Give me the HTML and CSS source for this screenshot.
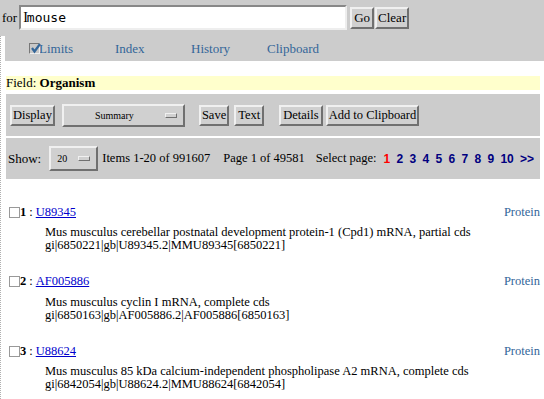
FILE: index.html
```html
<!DOCTYPE html>
<html>
<head>
<meta charset="utf-8">
<link rel="stylesheet" href="styles.css">
</head>
<body>
<div class="search">
  <span class="for">for</span>
  <div class="input"><span class="caret">I</span>mouse</div>
  <span class="btn go">Go</span>
  <span class="btn clear">Clear</span>
</div>
<div class="page">
  <div class="gutter"></div>
  <div class="content">
    <div class="tabs">
      <span class="tab limits"><span class="cbx checked"><svg width="11" height="11" viewBox="0 0 11 11"><path d="M2 5 L4.5 8.5 L10 1" fill="none" stroke="#336699" stroke-width="2.2"/></svg></span>Limits</span>
      <span class="tab">Index</span>
      <span class="tab">History</span>
      <span class="tab">Clipboard</span>
    </div>
    <div class="inner">
      <div class="field">Field: <b>Organism</b></div>
      <div class="bar display">
        <span class="btn">Display</span>
        <span class="option wide"><span class="opt-label small">Summary</span><span class="ind"></span></span>
        <span class="btn save">Save</span>
        <span class="btn text">Text</span>
        <span class="btn details">Details</span>
        <span class="btn add">Add to Clipboard</span>
      </div>
      <div class="bar show">
        <span class="showlbl">Show:</span>
        <span class="option narrow"><span class="opt-label small">20</span><span class="ind"></span></span>
        <span class="items">Items 1-20 of 991607</span>
        <span class="pageof">Page 1 of 49581</span>
        <span class="sel">Select page:</span>
        <span class="pages"><span class="cur">1</span><a>2</a><a>3</a><a>4</a><a>5</a><a>6</a><a>7</a><a>8</a><a>9</a><a>10</a><a>&gt;&gt;</a></span>
      </div>
      <div class="results">
        <div class="doc">
          <div class="head"><span class="cb"></span><b>1</b> : <a class="acc">U89345</a><span class="prot">Protein</span></div>
          <div class="desc">Mus musculus cerebellar postnatal development protein-1 (Cpd1) mRNA, partial cds<br>gi|6850221|gb|U89345.2|MMU89345[6850221]</div>
        </div>
        <div class="doc">
          <div class="head"><span class="cb"></span><b>2</b> : <a class="acc">AF005886</a><span class="prot">Protein</span></div>
          <div class="desc">Mus musculus cyclin I mRNA, complete cds<br>gi|6850163|gb|AF005886.2|AF005886[6850163]</div>
        </div>
        <div class="doc">
          <div class="head"><span class="cb"></span><b>3</b> : <a class="acc">U88624 </a><span class="prot">Protein</span></div>
          <div class="desc">Mus musculus 85 kDa calcium-independent phospholipase A2 mRNA, complete cds<br>gi|6842054|gb|U88624.2|MMU88624[6842054]</div>
        </div>
      </div>
    </div>
  </div>
</div>
</body>
</html>
```
FILE: styles.css
```css
html, body { margin: 0; padding: 0; background: #fff; }
body { font-family: "Liberation Serif", "Times New Roman", serif; font-size: 12.5px; color: #000; width: 544px; height: 399px; overflow: hidden; white-space: nowrap; }

.search { background: #cccccc; height: 36px; display: flex; align-items: center; padding-left: 2px; box-sizing: border-box; }
.for { margin-right: 2px; font-size: 13px; }
.input { width: 322px; height: 21px; background: #fff; border: 2px solid; border-color: #888 #eee #eee #888; font-family: "DejaVu Sans Mono", monospace; font-size: 13px; line-height: 21px; padding-left: 2px; margin-top: -2px; }
.caret { font-family: "Liberation Serif", serif; font-size: 14px; margin-right: -1px; }

.btn { display: inline-block; background: #d0d0d0; border: 2px solid; border-color: #f0f0f0 #707070 #707070 #f0f0f0; padding: 0 1px; height: 17px; line-height: 17px; font-size: 12.5px; }
.go { margin-left: 3px; padding: 0 2px; height: 18px; line-height: 18px; font-size: 13px; }
.clear { margin-left: 1px; padding: 0 1px; height: 18px; line-height: 18px; font-size: 13px; }

.page { display: flex; }
.gutter { width: 5px; border-left: 1px dotted #b0b0b0; box-sizing: border-box; height: 363px; }
.content { flex: 1; }

.tabs { background: #cccccc; height: 25px; display: flex; align-items: center; color: #336699; font-size: 13px; padding-left: 24px; }
.tab { width: 76px; }
.limits { width: 86px; display: flex; align-items: center; }
.cbx { display: inline-block; width: 9px; height: 9px; border: 1px solid; border-color: #777 #eee #eee #777; background: #c8c8c8; position: relative; margin-right: -1px; }
.cbx svg { position: absolute; left: 0; top: -1px; }

.inner { width: 534px; padding-left: 1px; }
.field { background: #ffffcc; height: 14px; line-height: 14px; margin-top: 15px; font-size: 13px; }
.bar { background: #cccccc; display: flex; align-items: center; }
.display { margin-top: 4px; height: 42px; padding-left: 4px; }
.show { margin-top: 2px; height: 41px; padding-left: 2px; }

.option { display: inline-flex; align-items: center; justify-content: space-between; background: #d0d0d0; border: 2px solid; border-color: #f0f0f0 #707070 #707070 #f0f0f0; height: 19px; box-sizing: content-box; }
.wide { width: 113px; margin-left: 7px; padding: 0 6px 0 0; }
.wide .opt-label { flex: 1; text-align: center; }
.narrow { width: 33px; margin-left: 8px; padding: 0 6px 0 6px; height: 21px; }
.small { font-size: 10px; font-family: "Liberation Serif", serif; }
.ind { width: 10px; height: 3px; background: #d0d0d0; border: 1px solid; border-color: #f0f0f0 #707070 #707070 #f0f0f0; }
.save { margin-left: 14px; }
.text { margin-left: 5px; padding: 0 2px; }
.details { margin-left: 15px; padding: 0 2px; }
.add { margin-left: 3px; }

.showlbl { font-size: 13px; }
.items { margin-left: 4px; }
.pageof { margin-left: 13px; }
.sel { margin-left: 11px; }
.pages { font-family: "Liberation Sans", Arial, sans-serif; font-weight: bold; font-size: 12px; margin-left: 7px; }
.pages .cur { color: #ff0000; }
.pages a { color: #000080; margin-left: 6.3px; }

.results { padding-top: 26px; }
.doc { height: 69.5px; }
.head { display: flex; align-items: center; height: 14px; position: relative; padding-left: 3px; }
.cb { display: inline-block; width: 9px; height: 9px; border: 1px solid #999; background: #fff; }
.head b { margin-right: 3px; }
.acc { color: #0000cc; text-decoration: underline; margin-left: 3px; }
.prot { margin-left: auto; color: #336699; margin-right: 0; }
.desc { margin-left: 39px; margin-top: 7px; line-height: 13px; }
```
